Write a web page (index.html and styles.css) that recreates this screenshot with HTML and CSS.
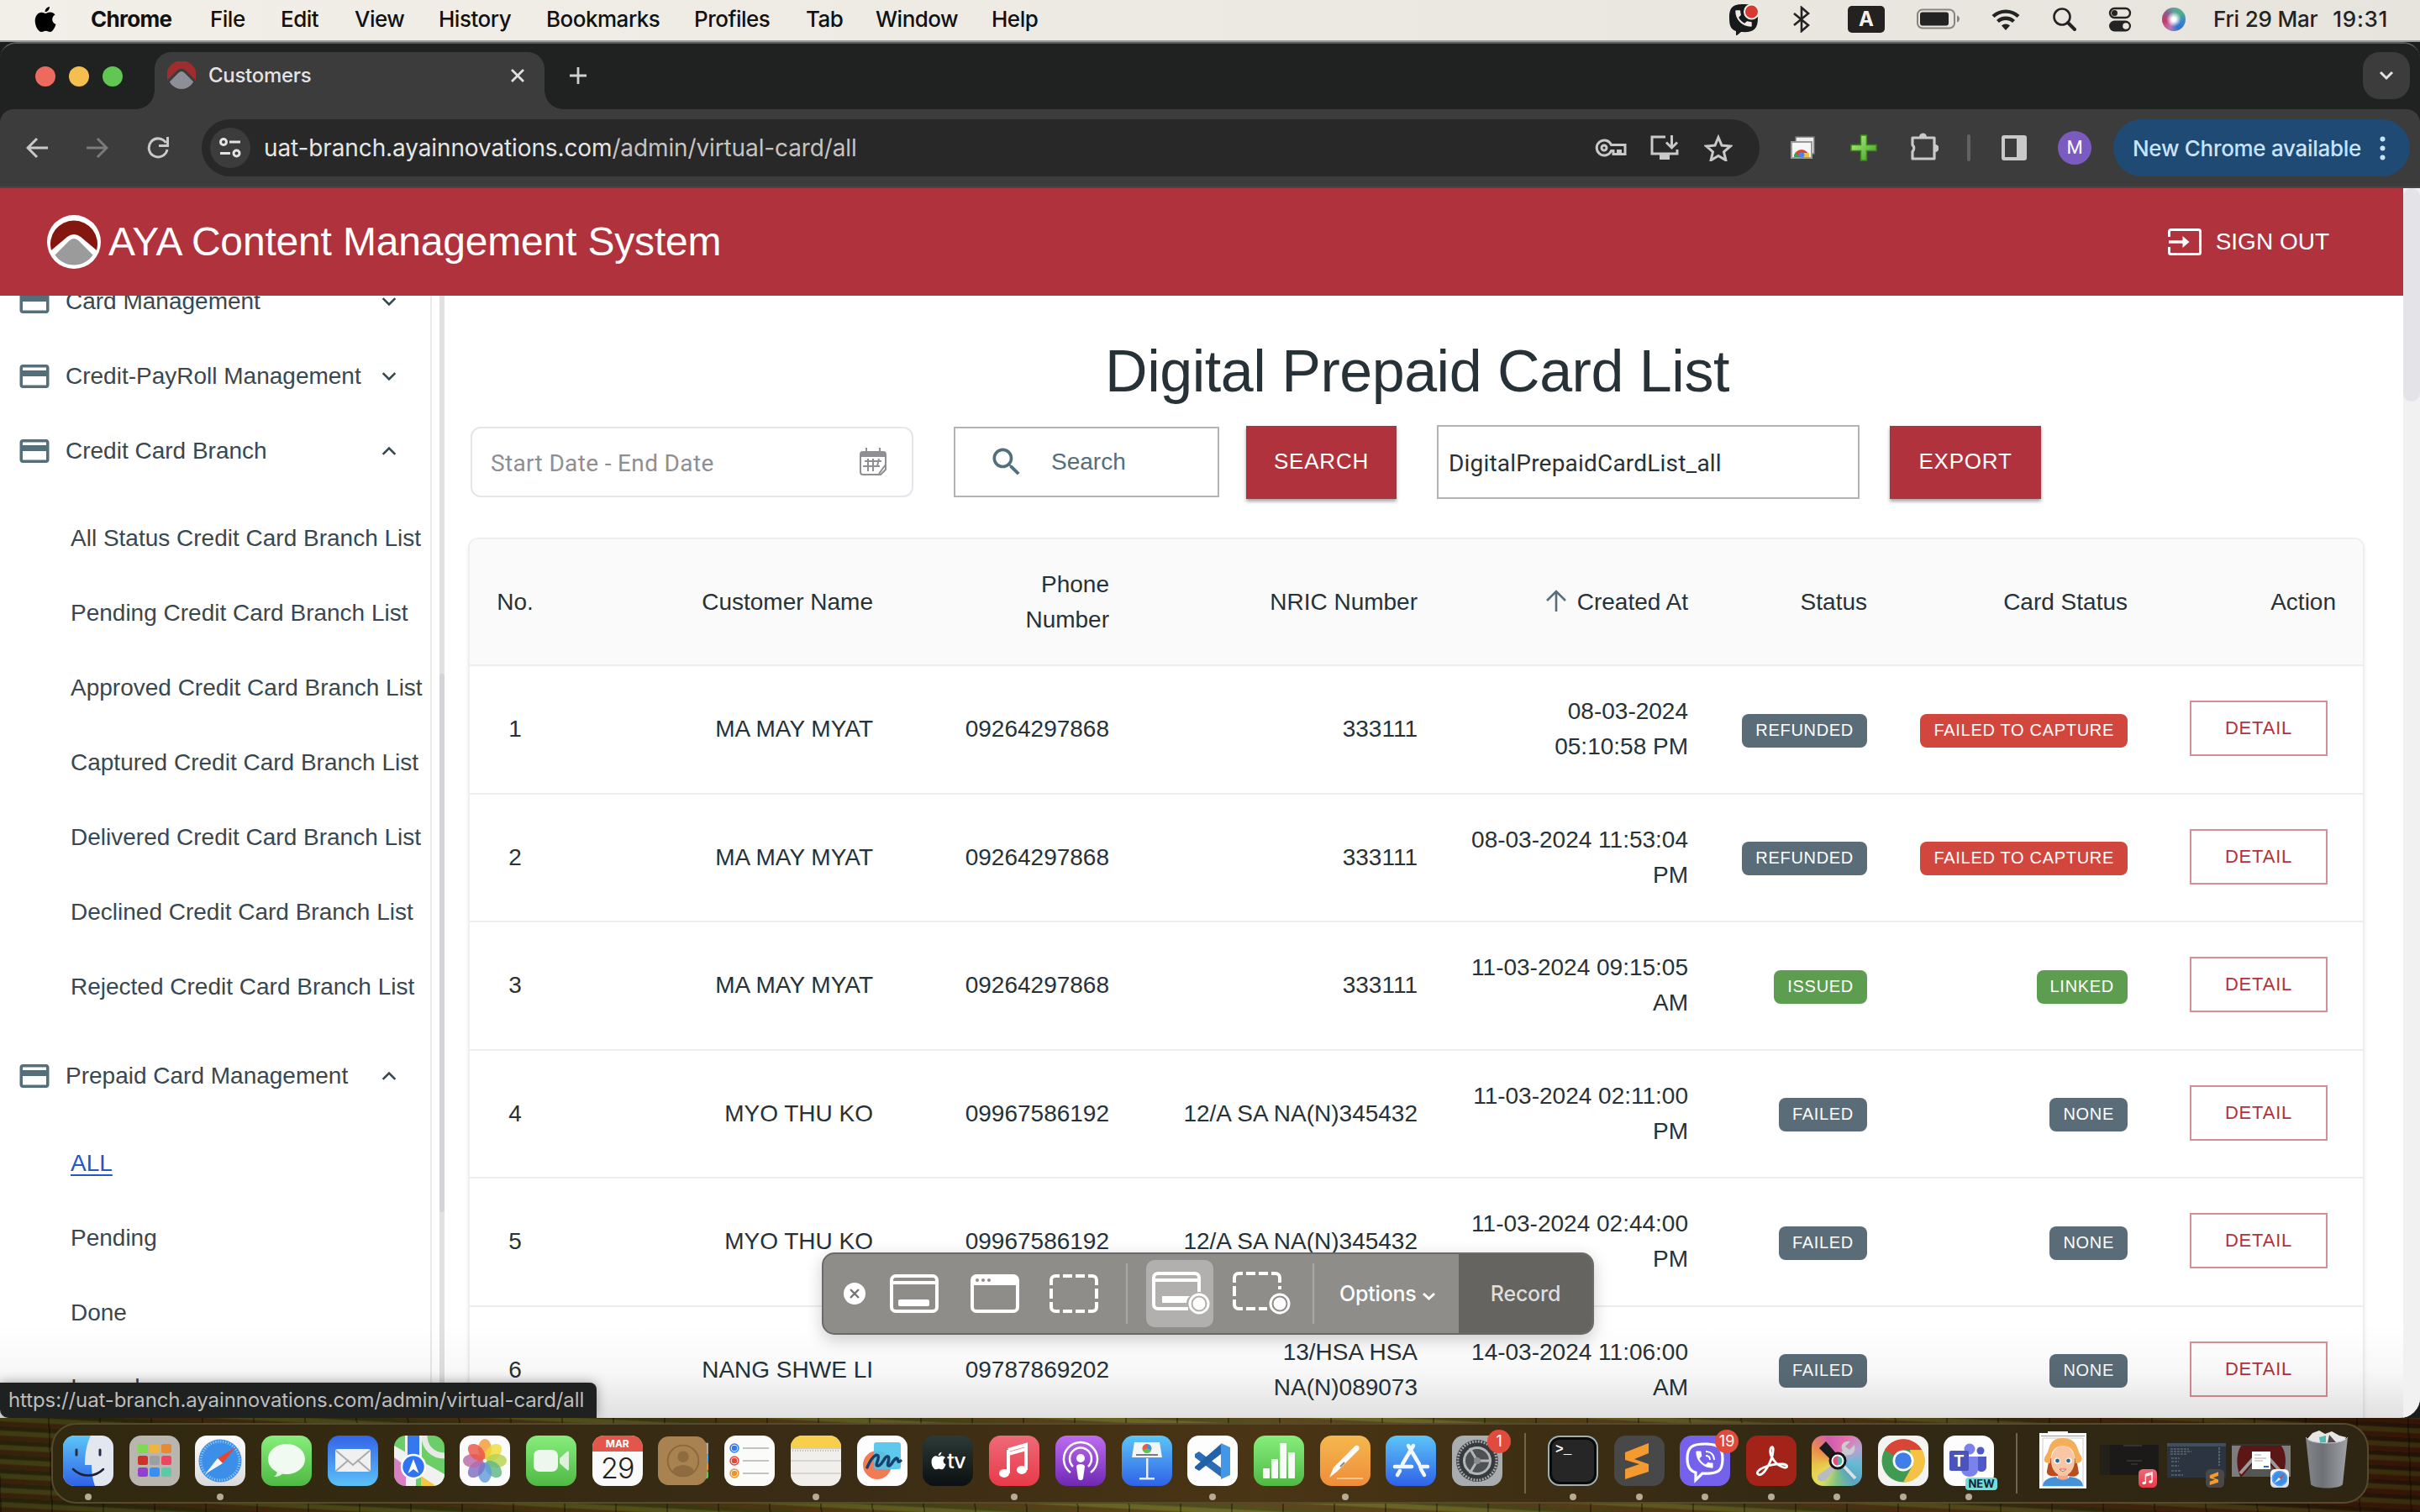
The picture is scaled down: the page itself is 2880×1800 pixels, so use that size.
FILE: index.html
```html
<!DOCTYPE html>
<html lang="en">
<head>
<meta charset="utf-8">
<title>Customers</title>
<link rel="stylesheet" href="styles.css">
</head>
<body>
<svg class="defs" aria-hidden="true">
  <defs>
    <linearGradient id="gBlue" x1="0" y1="0" x2="0" y2="1"><stop offset="0" stop-color="#5cc5f7"/><stop offset="1" stop-color="#2f62e8"/></linearGradient>
    <linearGradient id="gBlueRev" x1="0" y1="0" x2="0" y2="1"><stop offset="0" stop-color="#3464e8"/><stop offset="1" stop-color="#5cc2f6"/></linearGradient>
    <linearGradient id="gGreen" x1="0" y1="0" x2="0" y2="1"><stop offset="0" stop-color="#87ee7c"/><stop offset="1" stop-color="#4fb944"/></linearGradient>
    <linearGradient id="gWhite" x1="0" y1="0" x2="0" y2="1"><stop offset="0" stop-color="#fff"/><stop offset="1" stop-color="#d9dad9"/></linearGradient>
    <linearGradient id="gRed" x1="0" y1="0" x2="0" y2="1"><stop offset="0" stop-color="#ee6a78"/><stop offset="1" stop-color="#e83a48"/></linearGradient>
    <linearGradient id="gPurple" x1="0" y1="0" x2="0" y2="1"><stop offset="0" stop-color="#bd6cf0"/><stop offset="1" stop-color="#7029b4"/></linearGradient>
    <linearGradient id="gOrange" x1="0" y1="0" x2="0" y2="1"><stop offset="0" stop-color="#f4b84e"/><stop offset="1" stop-color="#ef8d3a"/></linearGradient>
    <linearGradient id="gPlus" x1="0" y1="0" x2="1" y2="1"><stop offset="0" stop-color="#b4f58c"/><stop offset="1" stop-color="#3f9a1d"/></linearGradient>
    <linearGradient id="gBin" x1="0" y1="0" x2="1" y2="0"><stop offset="0" stop-color="#83878b"/><stop offset=".4" stop-color="#6d7175"/><stop offset="1" stop-color="#9ea2a6"/></linearGradient>
    <symbol id="card" viewBox="0 0 24 24"><path d="M20 4H4c-1.110 0-1.990.89-1.990 2L2 18c0 1.110.89 2 2 2h16c1.110 0 2-.89 2-2V6c0-1.110-.89-2-2-2zm0 14H4v-6h16v6zm0-10H4V6h16v2z"/></symbol>
    <symbol id="down" viewBox="0 0 16 16"><path d="M1.500 4.500L8 11l6.500-6.500" fill="none" stroke="currentColor" stroke-width="2.300"/></symbol>
    <symbol id="up" viewBox="0 0 16 16"><path d="M1.500 11.500L8 5l6.500 6.500" fill="none" stroke="currentColor" stroke-width="2.300"/></symbol>
    <symbol id="note" viewBox="0 0 60 60"><rect width="60" height="60" rx="14" fill="url(#gRed)"/><path d="M23 17l21-6v30M23 17v28M23 22l21-6" fill="none" stroke="#fff" stroke-width="4"/><ellipse cx="18" cy="45" rx="6" ry="5" fill="#fff"/><ellipse cx="39" cy="41" rx="6" ry="5" fill="#fff"/></symbol>
    <symbol id="compass" viewBox="0 0 60 60"><rect width="60" height="60" rx="14" fill="url(#gWhite)"/><circle cx="30" cy="30" r="25.500" fill="#3b8fe8"/><circle cx="30" cy="30" r="23" fill="none" stroke="#a9d0f7" stroke-width="3" stroke-dasharray="1 2"/><path d="M48 14L27 27l6 6z" fill="#e8452f"/><path d="M12 46l21-13-6-6z" fill="#f4f6f8"/></symbol>
    <symbol id="sublime" viewBox="0 0 60 60"><rect width="60" height="60" rx="14" fill="#484848"/><path d="M13 20l28-11v12l-17 7 17 6v9L13 52V40l17-6-17-5z" fill="#f59a2f"/></symbol>
    <symbol id="handset" viewBox="0 0 24 24"><path d="M6.600 10.800c1.400 2.800 3.800 5.100 6.600 6.600l2.200-2.200c.3-.3.700-.4 1-.2 1.100.4 2.300.6 3.600.6.600 0 1 .4 1 1V20c0 .6-.4 1-1 1C10.600 21 3 13.400 3 4c0-.6.400-1 1-1h3.500c.6 0 1 .4 1 1 0 1.200.2 2.400.6 3.600.1.300 0 .7-.2 1z"/></symbol>
    <symbol id="apple" viewBox="0 0 26 32"><path d="M18 1c.3 3-2.600 6.400-5.400 6.200C12.300 4.300 15 1.300 18 1zM13 9c1.300 0 3-1.500 5.600-1.500 2.400 0 4.600 1.100 5.900 3-4.900 3-4.100 9.500 1 11.600C24 26.500 21.600 31 18.700 31c-2 0-2.700-1.300-5.200-1.300-2.500 0-3.400 1.300-5.200 1.300C4.600 31 .7 24 .7 18 .7 11.700 4.500 7.800 8.400 7.800 10.500 7.800 12 9 13 9z"/></symbol>
  </defs>
</svg>

<div class="menubar">
  <div class="menus">
    <svg class="apple" width="28" height="32"><use href="#apple"/></svg>
    <b>Chrome</b><span>File</span><span>Edit</span><span>View</span><span>History</span><span>Bookmarks</span><span>Profiles</span><span>Tab</span><span>Window</span><span>Help</span>
  </div>
  <div class="extras">
    <svg width="38" height="38" viewBox="0 0 38 38"><path d="M18 1C6 1 1 4 1 17c0 10 2 14 8 16v6l6-5C30 35 35 31 35 17 35 4 30 1 18 1z" fill="#17191a"/><use href="#handset" x="5" y="5" width="26" height="26" fill="#eceae3"/><circle cx="27.500" cy="10" r="8.500" fill="#d63a33" stroke="#f3efe8" stroke-width="2"/></svg>
    <svg class="m-bt" width="22" height="32" viewBox="0 0 22 32"><path d="M2 9l17 14-8 7V2l8 7L2 23" fill="none" stroke="#232323" stroke-width="2.600"/></svg>
    <span class="keyA">A</span>
    <svg class="m-bat" width="52" height="26" viewBox="0 0 52 26"><rect x="1" y="1.500" width="44" height="22" rx="6" fill="none" stroke="#85847f" stroke-width="2"/><rect x="4" y="4.500" width="34" height="16" rx="3" fill="#232323"/><path d="M48 8.500c4 1 4 7 0 8z" fill="#85847f"/></svg>
    <svg class="m-wifi" width="34" height="26" viewBox="0 0 34 26"><g fill="none" stroke="#232323" stroke-width="4.400"><path d="M2 9.500a22 22 0 0 1 30 0"/><path d="M7.500 15.500a14 14 0 0 1 19 0"/></g><path d="M17 26l-5-5.500a7 7 0 0 1 10 0z" fill="#232323"/></svg>
    <svg class="m-find" width="28" height="28" viewBox="0 0 28 28"><circle cx="11" cy="11" r="9.500" fill="none" stroke="#232323" stroke-width="2.600"/><path d="M18 18l8 8" stroke="#232323" stroke-width="4" stroke-linecap="round"/></svg>
    <svg class="m-cc" width="28" height="30" viewBox="0 0 28 30"><rect x="2" y="2" width="24" height="11" rx="5.500" fill="none" stroke="#232323" stroke-width="2.400"/><circle cx="7.500" cy="7.500" r="3.500" fill="#232323"/><rect x="1" y="16.500" width="26" height="13" rx="6.500" fill="#232323"/><circle cx="21" cy="23" r="3.800" fill="#e8e6df"/></svg>
    <i class="siri"></i>
    <span class="date">Fri 29 Mar</span><span class="time">19:31</span>
  </div>
</div>

<div class="window">
  <div class="tabstrip">
    <div class="lights"><i></i><i></i><i></i></div>
    <div class="tab">
      <svg width="34" height="34" viewBox="0 0 64 64"><circle cx="32" cy="32" r="30" fill="#8c8f95"/><path d="M0 44A34 34 0 1 1 64 44L42 22Q32 14 22 22z" fill="#9f2c2f"/><path d="M1 46L24 23q8-7 16 0L63 46" fill="none" stroke="#3b3b3b" stroke-width="6"/></svg>
      <span>Customers</span>
      <svg class="x" width="18" height="18" viewBox="0 0 18 18"><path d="M2 2l14 14M16 2L2 16" stroke="#e0e0e0" stroke-width="2.800"/></svg>
    </div>
    <svg class="plus" width="22" height="22" viewBox="0 0 22 22"><path d="M11 1v20M1 11h20" stroke="#d0d0d0" stroke-width="2.800"/></svg>
    <div class="tabsearch"><svg width="18" height="12" viewBox="0 0 18 12"><path d="M2 2l7 7 7-7" fill="none" stroke="#e3e3e3" stroke-width="3"/></svg></div>
  </div>

  <div class="toolbar">
    <svg class="back" width="26" height="26" viewBox="0 0 26 26"><path d="M26 13H3M13 2L2 13l11 11" fill="none" stroke="#c9c9c9" stroke-width="3"/></svg>
    <svg class="fwd" width="26" height="26" viewBox="0 0 26 26"><path d="M0 13h23M13 2l11 11-11 11" fill="none" stroke="#7b7b7b" stroke-width="3"/></svg>
    <svg class="reload" width="26" height="26" viewBox="0 0 26 26"><path d="M22.500 7A11 11 0 1 0 24 15" fill="none" stroke="#c9c9c9" stroke-width="3"/><path d="M24.500 0v10.500H14" fill="none" stroke="#c9c9c9" stroke-width="3"/></svg>
    <div class="omnibox">
      <i class="tune"><svg width="26" height="24" viewBox="0 0 26 24"><g fill="none" stroke="#e3e3e3" stroke-width="3"><circle cx="5" cy="5" r="3.500"/><path d="M12 5h13M1 18.500h12"/><circle cx="20.500" cy="18.500" r="3.500"/></g></svg></i>
      <span class="url">uat-branch.ayainnovations.com<em>/admin/virtual-card/all</em></span>
      <svg class="key" width="38" height="22" viewBox="0 0 38 22"><g fill="none" stroke="#c9c9c9" stroke-width="3"><path d="M19.500 7.500H36v11h-5.500v-4h-3v4H22v-4h-2.500A9 9 0 1 1 19.500 7.500z"/><circle cx="11" cy="11" r="3" fill="none"/></g></svg>
      <svg width="34" height="30" viewBox="0 0 34 30"><g fill="none" stroke="#c9c9c9" stroke-width="3"><path d="M18 2H2v20h30v-5"/><path d="M25.500 0v14M19 8.500l6.500 6.500 6.500-6.500"/></g><path d="M11 23h12v6H11z" fill="#c9c9c9"/></svg>
      <svg class="star" width="34" height="32" viewBox="0 0 34 32"><path d="M17 3.500l4 9.600 10.300.9-7.800 6.800 2.400 10L17 25.500 8.100 30.800l2.400-10L2.700 14l10.300-.9z" fill="none" stroke="#c9c9c9" stroke-width="3"/></svg>
    </div>
    <svg class="x-shop" width="30" height="28" viewBox="0 0 30 28"><path d="M6 1h22v20H6z" fill="#eee" stroke="#777" stroke-width="1.500"/><path d="M1 7h24v19H1z" fill="#f6f6f6" stroke="#999" stroke-width="2"/><path d="M4 25a9 9 0 0 1 18 0z" fill="#d2483a"/><path d="M4 25a9 9 0 0 1 2-6l5 6z" fill="#3f9b5b"/><path d="M15 20h6.500a9 9 0 0 1 .5 5h-7z" fill="#f4bf3f"/><circle cx="13" cy="22.500" r="3.300" fill="#4b82ee"/></svg>
    <svg class="x-plus" width="32" height="32" viewBox="0 0 32 32"><path d="M12.500 1h7v11.500H31v7H19.500V31h-7V19.500H1v-7h11.500z" fill="url(#gPlus)" stroke="#3a8a18" stroke-width="1.500"/></svg>
    <svg class="x-puz" width="34" height="34" viewBox="0 0 34 34"><path d="M3 7h26v25H3v-8.500a5.500 5.500 0 0 0 0-8z" fill="none" stroke="#c9c9c9" stroke-width="3.200" stroke-linejoin="round"/><path d="M11 6a4.500 4.500 0 0 1 9 0zM30 15a4.500 4.500 0 0 1 0 9z" fill="#c9c9c9"/></svg>
    <i class="vline"></i>
    <svg class="x-side" width="30" height="30" viewBox="0 0 30 30"><path d="M3 0h24a3 3 0 0 1 3 3v24a3 3 0 0 1-3 3H3a3 3 0 0 1-3-3V3a3 3 0 0 1 3-3zm1 4v22h14V4z" fill="#c9c9c9"/></svg>
    <span class="avatar">M</span>
    <div class="update"><span>New Chrome available</span><i></i></div>
  </div>

  <div class="page">
    <div class="app">
      <header class="appbar">
        <svg width="64" height="64" viewBox="0 0 64 64"><circle cx="32" cy="32" r="32" fill="#fff"/><path d="M5 42A28 28 0 1 1 59 42L40 26q-8-6-16 0z" fill="#84170f"/><path d="M9.500 47.500L26 31q6-6 12 0l16.500 16.500a27 27 0 0 1-45 0z" fill="#9b9b9b"/></svg>
        <h1>AYA Content Management System</h1>
        <div class="signout">
          <svg width="40" height="32" viewBox="0 0 40 32"><path d="M1.500 10V3.500a2 2 0 0 1 2-2h33a2 2 0 0 1 2 2v25a2 2 0 0 1-2 2h-33a2 2 0 0 1-2-2V22" fill="none" stroke="#fff" stroke-width="3"/><path d="M1 16h21" stroke="#fff" stroke-width="3.400"/><path d="M17.500 9l8 7-8 7z" fill="#fff"/></svg>
          <span>SIGN OUT</span>
        </div>
      </header>
      <div class="body">
        <nav class="side">
          <div class="group cut"><svg><use href="#card"/></svg><span>Card Management</span><svg class="chev"><use href="#down"/></svg></div>
          <div class="group"><svg><use href="#card"/></svg><span>Credit-PayRoll Management</span><svg class="chev"><use href="#down"/></svg></div>
          <div class="group"><svg><use href="#card"/></svg><span>Credit Card Branch</span><svg class="chev"><use href="#up"/></svg></div>
          <ul>
            <li>All Status Credit Card Branch List</li><li>Pending Credit Card Branch List</li><li>Approved Credit Card Branch List</li><li>Captured Credit Card Branch List</li><li>Delivered Credit Card Branch List</li><li>Declined Credit Card Branch List</li><li>Rejected Credit Card Branch List</li>
          </ul>
          <div class="group"><svg><use href="#card"/></svg><span>Prepaid Card Management</span><svg class="chev"><use href="#up"/></svg></div>
          <ul>
            <li class="active">ALL</li><li>Pending</li><li>Done</li><li>Issued</li>
          </ul>
        </nav>
        <div class="track"><i></i></div>
        <main>
          <h2>Digital Prepaid Card List</h2>
          <div class="filters">
            <div class="dates"><span>Start Date - End Date</span>
              <svg width="34" height="34" viewBox="0 0 34 34"><g fill="none" stroke="#8e8e93" stroke-width="2"><path d="M22 32H5a3 3 0 0 1-3-3V9M32 10v10M32 20v6l-6 6h-4M32 20l-8 11"/><path d="M7 16h20M5 22h20M11 13v15M17 13v15M24 13l-2 9"/><path d="M9 0v6M25 0v6"/></g><path d="M5 4h24a4 4 0 0 1 4 4v3H1V8a4 4 0 0 1 4-4z" fill="#8e8e93"/></svg>
            </div>
            <div class="find"><svg width="44" height="44" viewBox="0 0 24 24"><path d="M15.500 14h-.79l-.28-.27C15.410 12.590 16 11.110 16 9.500 16 5.910 13.090 3 9.500 3S3 5.910 3 9.500 5.910 16 9.500 16c1.610 0 3.090-.59 4.230-1.570l.27.28v.79l5 4.990L20.490 19l-4.990-5zm-6 0C7.010 14 5 11.990 5 9.500S7.010 5 9.500 5 14 7.010 14 9.500 11.990 14 9.500 14z" fill="#546e7a"/></svg><span>Search</span></div>
            <div class="btn b-search">SEARCH</div>
            <div class="fname">DigitalPrepaidCardList_all</div>
            <div class="btn b-export">EXPORT</div>
          </div>
          <div class="table">
            <div class="tr th"><span>No.</span><span>Customer Name</span><span>Phone<br>Number</span><span>NRIC Number</span><span class="sort"><svg width="26" height="28" viewBox="0 0 26 28"><path d="M13 27V3M2 14L13 3l11 11" fill="none" stroke="#546e7a" stroke-width="2.600"/></svg>Created At</span><span>Status</span><span>Card Status</span><span>Action</span></div>
            <div class="tr"><span>1</span><span>MA MAY MYAT</span><span>09264297868</span><span>333111</span><span>08-03-2024<br>05:10:58 PM</span><span><b class="gray">REFUNDED</b></span><span><b class="red">FAILED TO CAPTURE</b></span><span><a>DETAIL</a></span></div>
            <div class="tr"><span>2</span><span>MA MAY MYAT</span><span>09264297868</span><span>333111</span><span>08-03-2024 11:53:04<br>PM</span><span><b class="gray">REFUNDED</b></span><span><b class="red">FAILED TO CAPTURE</b></span><span><a>DETAIL</a></span></div>
            <div class="tr"><span>3</span><span>MA MAY MYAT</span><span>09264297868</span><span>333111</span><span>11-03-2024 09:15:05<br>AM</span><span><b class="green">ISSUED</b></span><span><b class="green">LINKED</b></span><span><a>DETAIL</a></span></div>
            <div class="tr"><span>4</span><span>MYO THU KO</span><span>09967586192</span><span>12/A SA NA(N)345432</span><span>11-03-2024 02:11:00<br>PM</span><span><b class="gray">FAILED</b></span><span><b class="gray">NONE</b></span><span><a>DETAIL</a></span></div>
            <div class="tr"><span>5</span><span>MYO THU KO</span><span>09967586192</span><span>12/A SA NA(N)345432</span><span>11-03-2024 02:44:00<br>PM</span><span><b class="gray">FAILED</b></span><span><b class="gray">NONE</b></span><span><a>DETAIL</a></span></div>
            <div class="tr"><span>6</span><span>NANG SHWE LI</span><span>09787869202</span><span>13/HSA HSA<br>NA(N)089073</span><span>14-03-2024 11:06:00<br>AM</span><span><b class="gray">FAILED</b></span><span><b class="gray">NONE</b></span><span><a>DETAIL</a></span></div>
          </div>
        </main>
      </div>
    </div>
    <div class="scroll"><i></i></div>
    <div class="shade"></div>
    <div class="statusurl">https://uat-branch.ayainnovations.com/admin/virtual-card/all</div>
  </div>
</div>

<div class="desktop">
  <div class="dock">
    <div class="apps">
      <div class="ic run"><svg viewBox="0 0 60 60"><rect width="60" height="60" rx="14" fill="#e3e8f0"/><path d="M14 0h19c-5 10-7 22-7 35h8c0 9 1 17 4 25H14A14 14 0 0 1 0 46V14A14 14 0 0 1 14 0z" fill="url(#gBlue)"/><path d="M16 17v6M44 17v6" stroke="#222c44" stroke-width="3" stroke-linecap="round"/><path d="M12 40c10 10 26 10 36 0" fill="none" stroke="#1a2238" stroke-width="2.500" stroke-linecap="round"/></svg></div>
      <div class="ic"><svg viewBox="0 0 60 60"><rect width="60" height="60" rx="14" fill="#b9b6af"/><rect x="10" y="10" width="12" height="11" rx="2.500" fill="#7ddb50"/><rect x="24" y="10" width="12" height="11" rx="2.500" fill="#f0b63a"/><rect x="38" y="10" width="12" height="11" rx="2.500" fill="#ea8930"/><rect x="10" y="24" width="12" height="11" rx="2.500" fill="#d02f2a"/><rect x="24" y="24" width="12" height="11" rx="2.500" fill="#9da0a2"/><rect x="38" y="24" width="12" height="11" rx="2.500" fill="#ef4562"/><rect x="10" y="38" width="12" height="11" rx="2.500" fill="#9240d0"/><rect x="24" y="38" width="12" height="11" rx="2.500" fill="#3490f3"/><rect x="38" y="38" width="12" height="11" rx="2.500" fill="#5cc9a7"/></svg></div>
      <div class="ic run"><svg><use href="#compass"/></svg></div>
      <div class="ic"><svg viewBox="0 0 60 60"><rect width="60" height="60" rx="14" fill="url(#gGreen)"/><ellipse cx="30" cy="28" rx="22" ry="18" fill="#f1faf0"/><path d="M19 41c0 4-1 6-4 8 5 0 9-2 12-5z" fill="#e6f5e4"/></svg></div>
      <div class="ic"><svg viewBox="0 0 60 60"><rect width="60" height="60" rx="14" fill="url(#gBlueRev)"/><rect x="9" y="16" width="42" height="27" rx="3" fill="#f0f0f0"/><path d="M10 18l20 17 20-17M10 42l15-13M50 42L35 29" fill="none" stroke="#a9a9a9" stroke-width="1.800"/></svg></div>
      <div class="ic"><svg viewBox="0 0 60 60"><clipPath id="rr"><rect width="60" height="60" rx="14"/></clipPath><g clip-path="url(#rr)"><path d="M0 0h60v60H0z" fill="#6cce67"/><path d="M0 25l20 12v23H0z" fill="#d97fc4"/><path d="M0 12l60 34v14H46L0 26z" fill="#f1f1f1"/><path d="M14 36h12v24H14z" fill="#f1f1f1"/><path d="M32 60V48l18 12z" fill="#f3c744"/><path d="M36 0c0 14 10 24 24 24" fill="none" stroke="#e8e8e8" stroke-width="7"/><path d="M13 0h20v30H13z" fill="#f1f1f1"/><path d="M16 0h14v30H16z" fill="#3577ef"/></g><circle cx="23" cy="37" r="14" fill="#2f74f0" stroke="#fff" stroke-width="2.500"/><path d="M23 28l6.500 17-6.500-5-6.500 5z" fill="#fff"/></svg></div>
      <div class="ic"><svg viewBox="0 0 60 60"><rect width="60" height="60" rx="14" fill="#fbfbfb"/><g fill-opacity=".82"><ellipse cx="30" cy="16" rx="8" ry="12" fill="#f39a36"/><ellipse cx="30" cy="16" rx="8" ry="12" fill="#ecdc3a" transform="rotate(45 30 30)"/><ellipse cx="30" cy="16" rx="8" ry="12" fill="#b6d34d" transform="rotate(90 30 30)"/><ellipse cx="30" cy="16" rx="8" ry="12" fill="#60b682" transform="rotate(135 30 30)"/><ellipse cx="30" cy="16" rx="8" ry="12" fill="#629bdc" transform="rotate(180 30 30)"/><ellipse cx="30" cy="16" rx="8" ry="12" fill="#7d6fc4" transform="rotate(225 30 30)"/><ellipse cx="30" cy="16" rx="8" ry="12" fill="#b968a8" transform="rotate(270 30 30)"/><ellipse cx="30" cy="16" rx="8" ry="12" fill="#ea5546" transform="rotate(315 30 30)"/></g></svg></div>
      <div class="ic"><svg viewBox="0 0 60 60"><rect width="60" height="60" rx="14" fill="url(#gGreen)"/><rect x="9" y="17" width="29" height="26" rx="7" fill="#eef7ed"/><path d="M40 27l9-8c1-1 2 0 2 1v20c0 1-1 2-2 1l-9-8z" fill="#dff0dd"/></svg></div>
      <div class="ic cal"><b>MAR</b><span>29</span></div>
      <div class="ic"><svg viewBox="0 0 62 60"><rect x="50" y="8" width="12" height="14" fill="#aaa"/><rect x="50" y="22" width="12" height="11" fill="#5ba4e0"/><rect x="50" y="33" width="12" height="9" fill="#e69535"/><rect x="50" y="42" width="12" height="10" rx="3" fill="#5fca62"/><rect width="60" height="60" rx="13" fill="#a98251"/><circle cx="31" cy="30" r="19" fill="none" stroke="#8c683c" stroke-width="2"/><circle cx="31" cy="25" r="7" fill="#8f6b40"/><path d="M18 43c2-10 24-10 26 0-8 8-18 8-26 0z" fill="#8f6b40"/></svg></div>
      <div class="ic"><svg viewBox="0 0 60 60"><rect width="60" height="60" rx="14" fill="#fbfbfa"/><g stroke="#c3c3c5" stroke-width="1.800"><path d="M22 15h31M22 30h31M22 45h31"/></g><g fill="none" stroke-width="1.500"><circle cx="12" cy="15" r="5" stroke="#2f7bf6"/><circle cx="12" cy="30" r="5" stroke="#e2473c"/><circle cx="12" cy="45" r="5" stroke="#e8932f"/></g><circle cx="12" cy="15" r="3.300" fill="#2f7bf6"/><circle cx="12" cy="30" r="3.300" fill="#e2473c"/><circle cx="12" cy="45" r="3.300" fill="#e8932f"/></svg></div>
      <div class="ic run"><svg viewBox="0 0 60 60"><rect width="60" height="60" rx="14" fill="#f0efec"/><path d="M0 15V14A14 14 0 0 1 14 0h32a14 14 0 0 1 14 14v1z" fill="#f8cf4b"/><path d="M0 15.500h60M0 30h60M0 45h60" stroke="#cfcdc9" stroke-width="1.500"/><path d="M2 18h56" stroke="#aaa" stroke-width="1.500" stroke-dasharray="1 2"/></svg></div>
      <div class="ic"><svg viewBox="0 0 60 60"><rect width="60" height="60" rx="14" fill="#fdfdfd"/><circle cx="24" cy="35" r="17" fill="#f07c56"/><rect x="20" y="8" width="32" height="32" rx="3" fill="#50c4ea" fill-opacity=".92"/><path d="M12 38c5-12 11-17 13-14 2 4-5 12 0 12s8-13 12-11c3 2-3 11 1 11 3 0 5-8 9-9 3 0 0 7 5 3" fill="none" stroke="#17406b" stroke-width="3.500" stroke-linecap="round"/></svg></div>
      <div class="ic tv"><svg width="18" height="22"><use href="#apple" fill="#fff"/></svg><span>tv</span></div>
      <div class="ic run"><svg><use href="#note"/></svg></div>
      <div class="ic"><svg viewBox="0 0 60 60"><rect width="60" height="60" rx="14" fill="url(#gPurple)"/><g fill="none" stroke="#fff" stroke-width="2.500"><path d="M18 44a20 20 0 1 1 24 0"/><path d="M21 37a13 13 0 1 1 18 0"/></g><circle cx="30" cy="27" r="5" fill="#fff"/><path d="M25 37c0-4 10-4 10 0l-2 14c-1 3-5 3-6 0z" fill="#fff"/></svg></div>
      <div class="ic"><svg viewBox="0 0 60 60"><rect width="60" height="60" rx="14" fill="url(#gBlue)"/><path d="M15 8h30l3 18H12z" fill="#f5f5f5"/><path d="M29 27h2.500v23H29zM21 50h18v2.500H21z" fill="#e6edf5"/><path d="M17 23h26" stroke="#456" stroke-width="1.500"/><circle cx="30" cy="15.500" r="5.500" fill="#5fc05a"/><path d="M30 15.500V10a5.500 5.500 0 0 1 5 7z" fill="#3e8eea"/><path d="M30 15.500V10a5.500 5.500 0 0 0-5 7z" fill="#ee5a42"/></svg></div>
      <div class="ic run"><svg viewBox="0 0 60 60"><rect width="60" height="60" rx="14" fill="#fdfdfd"/><path d="M9 22l5-3 27 20v11L9 26z" fill="#2a6db5"/><path d="M9 37l31-27v12L14 42l-5-3z" fill="#2460a8"/><path d="M40 9l11 5v33l-11 5z" fill="#4297e6"/></svg></div>
      <div class="ic"><svg viewBox="0 0 60 60"><rect width="60" height="60" rx="14" fill="url(#gGreen)"/><g fill="#f6fbf5"><rect x="11" y="39" width="8" height="12" rx="1"/><rect x="21" y="28" width="8" height="23" rx="1"/><rect x="31" y="9" width="8" height="42" rx="1"/><rect x="41" y="20" width="8" height="31" rx="1"/></g></svg></div>
      <div class="ic run"><svg viewBox="0 0 60 60"><rect width="60" height="60" rx="14" fill="url(#gOrange)"/><path d="M11 50l5-12 26-26c3-1 6 1 4 5L20 43z" fill="#fafafa"/><path d="M24 37l5-5" stroke="#888" stroke-width="2"/><path d="M20 51h31" stroke="#fbdcae" stroke-width="1.500"/></svg></div>
      <div class="ic"><svg viewBox="0 0 60 60"><rect width="60" height="60" rx="14" fill="url(#gBlue)"/><g stroke="#f2f7ff" stroke-width="4.500" stroke-linecap="round"><path d="M33 12L20 34M17 42l-3 5M27 12l13 22M42 40l4 7M11 37h20M41 37h9"/></g></svg></div>
      <div class="ic"><svg viewBox="0 0 60 60"><rect width="60" height="60" rx="14" fill="#a9adb0"/><circle cx="30" cy="30" r="25" fill="#37393b"/><circle cx="30" cy="30" r="23" fill="none" stroke="#a5a8aa" stroke-width="3" stroke-dasharray="2 1.500"/><circle cx="30" cy="30" r="15.500" fill="#4e5154" stroke="#b3b6b8" stroke-width="3"/><path d="M30 30h17M30 30l-9-15M30 30l-9 15" stroke="#b3b6b8" stroke-width="3"/><circle cx="30" cy="30" r="4" fill="#898c8f"/></svg><em>1</em></div>
    </div>
    <i class="sep"></i>
    <div class="apps second">
      <div class="ic run term"><svg viewBox="0 0 60 60"><rect x="1" y="1" width="58" height="58" rx="13" fill="#0a0a0a" stroke="#9fb0b5" stroke-width="2"/><rect x="5" y="5" width="50" height="50" rx="9" fill="#262626"/></svg><span>&gt;_</span></div>
      <div class="ic run"><svg><use href="#sublime"/></svg></div>
      <div class="ic run"><svg viewBox="0 0 60 60"><rect width="60" height="60" rx="14" fill="#7562ec"/><path d="M30 10c-16 0-21 4-21 18 0 9 3 14 10 16v9l8-8c19 1 24-3 24-17S46 10 30 10z" fill="none" stroke="#fff" stroke-width="3.200"/><use href="#handset" x="16" y="15" width="27" height="27" fill="#fff"/><path d="M31 19c6 0 10 4 10 10M31 24c3 0 5 2 5 5" fill="none" stroke="#fff" stroke-width="1.800"/></svg><em>19</em></div>
      <div class="ic run"><svg viewBox="0 0 60 60"><rect width="60" height="60" rx="14" fill="#a32318"/><path d="M14 46c-4-5 14-13 30-12 7 1 5 5 1 4C36 36 27 24 29 16c1-4 4-3 3 3-1 11-12 32-18 27z" fill="none" stroke="#fff" stroke-width="2.800"/></svg></div>
      <div class="ic run"><i class="rainbow"></i><svg viewBox="0 0 60 60"><path d="M17 7l17 20-7 6L9 15z" fill="#1b1b1d"/><path d="M51 11l-6 6-5-4 6-6c-8-2-13 5-9 11l-6 8 4 4 6-7c8 2 12-5 10-12z" fill="#c9cdd0"/><path d="M8 47l18-13 4 4-13 15c-6 4-13 0-9-6z" fill="#b8bcc0"/><path d="M36 34l16 17" stroke="#dde0e2" stroke-width="4"/><circle cx="31" cy="30" r="9" fill="#fff" stroke="#151515" stroke-width="3"/><circle cx="31" cy="30" r="5.500" fill="#47b8a3"/><path d="M31 24.500a5.500 5.500 0 0 0 0 11z" fill="#de5182"/></svg></div>
      <div class="ic run"><svg viewBox="0 0 60 60"><rect width="60" height="60" rx="14" fill="#f3f3f1"/><circle cx="30" cy="30" r="25.500" fill="#3f9b52"/><path d="M30 30L8 17a25.500 25.500 0 0 1 44.200 0H30z" fill="#d94536"/><path d="M52.200 17A25.500 25.500 0 0 1 30 55.500L41 36 38 17z" fill="#f5c344"/><circle cx="30" cy="30" r="12.500" fill="#fff"/><circle cx="30" cy="30" r="9.800" fill="#3f7de8"/></svg></div>
      <div class="ic run teams"><svg viewBox="0 0 60 60"><rect width="60" height="60" rx="14" fill="#fdfdfd"/><circle cx="31" cy="16" r="6.500" fill="#7b83eb"/><circle cx="44" cy="18" r="4.500" fill="#5059c9"/><path d="M39 25h12v12c0 8-12 8-12 0z" fill="#5059c9"/><path d="M21 25h20v15c0 12-20 12-20 0z" fill="#7b83eb"/><rect x="7" y="18" width="23" height="24" rx="2" fill="#4b53bc"/></svg><span>T</span><b>NEW</b></div>
    </div>
    <i class="sep"></i>
    <svg class="portrait" width="56" height="68" viewBox="0 0 56 68"><path d="M10 0h24v4H10z" fill="#f2f2f2"/><path d="M0 2h56v66H0z" fill="#fff"/><path d="M2 5.500h52" stroke="#7f9fc4"/><path d="M4 8h48v58H4z" fill="none" stroke="#ccc"/><path d="M12 32h32l3 18c-3 5-9 4-13 3H21c-6 1-13 0-12-6z" fill="#b84d22"/><path d="M22 46h12v12H22z" fill="#eda98a"/><path d="M4 65c1-8 8-10 16-11 3 5 13 5 16 0 8 1 15 3 16 11z" fill="#4592d8"/><ellipse cx="28" cy="35" rx="14" ry="18" fill="#f9c6a5"/><path d="M13 38C14 26 16 18 28 17c12 1 14 9 15 21 8 0 9-5 6-10-4-5-3-20-21-20S13 22 8 28c-4 6-3 10 5 10z" fill="#f4ae58"/><circle cx="21" cy="35" r="3.600" fill="#fff"/><circle cx="35" cy="35" r="3.600" fill="#fff"/><circle cx="21.500" cy="35" r="2.400" fill="#246b8d"/><circle cx="34.500" cy="35" r="2.400" fill="#246b8d"/><path d="M24 45h8q-4 5-8 0z" fill="#fff" stroke="#cf6151"/></svg>
    <svg class="mini1" width="72" height="56" viewBox="0 0 72 56"><path d="M0 1h70v36H0z" fill="#1b1a18"/><path d="M0 1h12v36H0z" fill="#232119"/><path d="M28 2h22" stroke="#333" stroke-width="2"/><path d="M32 20h18M37 24h8" stroke="#444"/><use href="#note" x="46" y="30" width="22" height="22"/></svg>
    <svg class="mini2" width="72" height="56" viewBox="0 0 72 56"><path d="M0 0h70v41H0z" fill="#2b343f"/><path d="M0 0h70v4H0z" fill="#424e5b"/><path d="M4 7h22M4 10h25M4 13h20M5 18h10M5 22h9M5 27h9M5 33h12M5 38h14M62 5v22" stroke="#70808f" stroke-width="1.200" stroke-dasharray="3 1"/><use href="#sublime" x="46" y="31" width="22" height="22"/></svg>
    <svg class="mini3" width="72" height="56" viewBox="0 0 72 56"><path d="M0 0h70v39H0z" fill="#7d7d7d"/><path d="M10 39C4 24 6 8 12 1h46c7 8 8 24 2 38z" fill="#5c1616"/><path d="M35 12L12 39h46z" fill="#555"/><path d="M32 10L10 35M38 10l22 25" stroke="#9b9b9b" stroke-width="4"/><path d="M0 0h70v2H0z" fill="#333"/><path d="M24 9h22v21H24z" fill="#fff"/><path d="M27 13h8M27 17h14M27 20h10" stroke="#aaa"/><path d="M38 26h6v2h-6z" fill="#2866c8"/><use href="#compass" x="46" y="30" width="22" height="22"/></svg>
    <svg class="bin" width="54" height="72" viewBox="0 0 54 72"><path d="M4 10l6-7 8-3 7 4 8-3 9 5 8 2-3 8H8z" fill="#e6e6e6"/><path d="M18 8l8-2v8h-7z" fill="#56b6b0"/><path d="M30 5l8 9-10 1z" fill="#55484c"/><path d="M2 8q3 7 25 7t25-7l-6 56c-3 6-34 6-38 0z" fill="url(#gBin)"/><path d="M2 8q4 7 25 7t25-7" fill="none" stroke="#b9bcbf"/></svg>
  </div>
</div>

<div class="recorder">
  <svg class="r-close" width="28" height="28" viewBox="0 0 28 28"><circle cx="14" cy="14" r="13" fill="#fff"/><path d="M9 9l10 10M19 9L9 19" stroke="#777" stroke-width="2.400"/></svg>
  <svg class="r1" width="58" height="46" viewBox="0 0 58 46"><g fill="none" stroke="#fff" stroke-width="4"><rect x="2" y="2" width="54" height="42" rx="5"/><path d="M2 10h54"/></g><rect x="10" y="30" width="37" height="8" rx="2" fill="#fff"/></svg>
  <svg class="r2" width="58" height="46" viewBox="0 0 58 46"><rect x="2" y="2" width="54" height="42" rx="5" fill="none" stroke="#fff" stroke-width="4"/><path d="M2 3h54v10H2z" fill="#fff"/><g fill="#8e8d8a"><circle cx="8" cy="7" r="2"/><circle cx="15" cy="7" r="2"/><circle cx="22" cy="7" r="2"/></g></svg>
  <svg class="r3" width="58" height="46" viewBox="0 0 58 46"><path d="M2 13V7a5 5 0 0 1 5-5h5M16 2h11M31 2h11M46 2h5a5 5 0 0 1 5 5v6M56 17v12M56 33v6a5 5 0 0 1-5 5h-5M42 44H31M27 44H16M12 44H7a5 5 0 0 1-5-5v-6M2 29V17" fill="none" stroke="#fff" stroke-width="4"/></svg>
  <i class="bar b1"></i>
  <div class="chosen"><svg width="70" height="52" viewBox="0 0 70 52"><path d="M43 44H7a5 5 0 0 1-5-5V7a5 5 0 0 1 5-5h44a5 5 0 0 1 5 5v17M2 10h54" fill="none" stroke="#fff" stroke-width="4"/><path d="M12 29h33c-3 3-4 5-4 8H12z" fill="#fff"/><circle cx="56" cy="38" r="11" fill="none" stroke="#fff" stroke-width="3"/><circle cx="56" cy="38" r="7.500" fill="#fff"/></svg></div>
  <svg class="r5" width="70" height="52" viewBox="0 0 70 52"><path d="M2 13V7a5 5 0 0 1 5-5h5M16 2h11M31 2h11M46 2h5a5 5 0 0 1 5 5v6M56 17v4M41 44H31M27 44H16M12 44H7a5 5 0 0 1-5-5v-6M2 29V17" fill="none" stroke="#fff" stroke-width="4"/><circle cx="56" cy="38" r="11" fill="none" stroke="#fff" stroke-width="3"/><circle cx="56" cy="38" r="7.500" fill="#fff"/></svg>
  <i class="bar b2"></i>
  <span class="opts">Options</span>
  <svg class="r-dn" width="17" height="11" viewBox="0 0 17 11"><path d="M2 2l6.500 6L15 2" fill="none" stroke="#fff" stroke-width="3"/></svg>
  <div class="rec">Record</div>
</div>
</body>
</html>
```
FILE: styles.css
```css
* { box-sizing: border-box; }
html, body { margin: 0; }
body {
  width: 2880px; height: 1800px; overflow: hidden; position: relative;
  display: flex; flex-direction: column;
  background: #1b1e1d;
  font-family: "Liberation Sans", Arial, sans-serif; color: #263238;
}
svg { display: block; flex: none; }
i, em, b { font-style: normal; }
.defs { position: absolute; width: 0; height: 0; }

/* menu bar */
.menubar {
  height: 50px; flex: none; display: flex; justify-content: space-between; align-items: center;
  padding: 0 38px 3px 0; background: linear-gradient(90deg, #f1efe8, #e6e4dc);
  border-bottom: 2px solid #9b9a96;
  font: 500 26px Inter, sans-serif; letter-spacing: -.5px; color: #111; white-space: nowrap;
}
.menus {
  display: grid; align-items: center; padding-left: 40px;
  grid-template-columns: 68px 142px 84px 88px 100px 128px 176px 133px 83px 138px 60px;
}
.menus b { font-weight: 700; letter-spacing: -.7px; }
.extras { display: flex; align-items: center; color: #232323; }
.m-bt { margin-left: 38px; }
.keyA { margin-left: 44px; width: 44px; height: 32px; border-radius: 5px; background: #232220; color: #f3f1ea; font-weight: 700; font-size: 24px; line-height: 32px; text-align: center; letter-spacing: 0; }
.m-bat { margin-left: 38px; }
.m-wifi { margin-left: 37px; }
.m-find { margin-left: 39px; }
.m-cc { margin-left: 38px; }
.siri { margin: 0 33px 0 36px; width: 28px; height: 28px; border-radius: 50%; background: radial-gradient(circle at 50% 50%, #fff 0 12%, transparent 45%), conic-gradient(#5fa39c, #4cae92, #3d83c4, #3273c9, #b878b5, #c8386e, #8d5a8a, #5fa39c); }
.date { letter-spacing: -.2px; }
.time { margin-left: 18px; letter-spacing: .7px; }

/* browser window */
.window { height: 1638px; flex: none; display: flex; flex-direction: column; border-radius: 20px 20px 24px 0; overflow: hidden; background: #202221; border-top: 2px solid #5d5f5e; }
.tabstrip { height: 78px; flex: none; display: flex; align-items: flex-start; background: #202221; padding-right: 12px; }
.lights { display: flex; gap: 16px; padding: 27px 0 0 42px; width: 184px; flex: none; }
.lights i { width: 24px; height: 24px; border-radius: 50%; background: #ed6a5f; }
.lights i:nth-child(2) { background: #f5bf4f; }
.lights i:nth-child(3) { background: #62c655; }
.tab { position: relative; margin-top: 10px; width: 464px; height: 68px; flex: none; border-radius: 20px 20px 0 0; background: #3c3c3c; display: flex; align-items: center; padding: 0 23px 13px 15px; font: 500 24px Inter, sans-serif; letter-spacing: -.3px; color: #e3e3e3; }
.tab::before, .tab::after { content: ""; position: absolute; bottom: 0; width: 22px; height: 22px; left: -22px; background: radial-gradient(circle at 0 0, transparent 21.500px, #3c3c3c 22px); }
.tab::after { left: auto; right: -22px; background: radial-gradient(circle at 100% 0, transparent 21.500px, #3c3c3c 22px); }
.tab span { margin-left: 15px; }
.tab .x { margin-left: auto; }
.plus { margin: 27px 0 0 29px; }
.tabsearch { margin: 10px 0 0 auto; width: 56px; height: 56px; border-radius: 20px; background: #3c3c3c; display: flex; align-items: center; justify-content: center; }
.toolbar { height: 94px; flex: none; display: flex; align-items: center; background: #3c3c3c; border-bottom: 2px solid #474747; border-radius: 16px 16px 0 0; padding: 0 12px 0 31px; }
.fwd { margin-left: 46px; }
.reload { margin-left: 46px; }
.omnibox { margin-left: 39px; width: 1854px; height: 68px; border-radius: 34px; background: #282828; display: flex; align-items: center; padding: 0 32px 0 10px; }
.tune { width: 48px; height: 48px; border-radius: 50%; background: #3c3c3c; display: flex; align-items: center; justify-content: center; }
.url { margin-left: 16px; font: 400 28px Inter, sans-serif; letter-spacing: -.12px; color: #e6e6e6; }
.url em { color: #c4c4c4; }
.key { margin: 0 28px 0 auto; }
.star { margin-left: 30px; }
.x-shop { margin-left: 37px; }
.x-plus { margin-left: 41px; }
.x-puz { margin-left: 39px; margin-bottom: 4px; }
.vline { width: 4px; height: 32px; border-radius: 2px; background: #626262; margin-left: 34px; }
.x-side { margin-left: 37px; }
.avatar { margin-left: 37px; width: 40px; height: 40px; border-radius: 50%; background: #7b5bbf; color: #fff; font: 400 22px/40px Roboto, sans-serif; text-align: center; }
.update { margin-left: auto; width: 353px; height: 68px; border-radius: 34px; background: #1f4a74; display: flex; align-items: center; padding-left: 23px; font: 500 26px Inter, sans-serif; letter-spacing: -.3px; color: #c9e3fb; white-space: nowrap; }
.update i { width: 5px; height: 5px; border-radius: 50%; background: #c9e3fb; margin-left: 23px; box-shadow: 0 -11px 0 .5px #c9e3fb, 0 0 0 .5px #c9e3fb, 0 11px 0 .5px #c9e3fb; }

/* page */
.page { position: relative; flex: 1; min-height: 0; display: flex; background: #fff; }
.app { width: 2860px; display: flex; flex-direction: column; min-height: 0; }
.scroll { width: 20px; background: #f1f1f1; }
.scroll i { display: block; height: 254px; border-radius: 10px; background: #e3e3e8; }
.appbar { height: 128px; flex: none; background: #b0323c; color: #fff; display: flex; align-items: center; padding: 0 88px 0 56px; }
.appbar h1 { margin: 0 0 2px 9px; font-weight: 400; font-size: 48px; letter-spacing: -.18px; }
.signout { margin-left: auto; display: flex; align-items: center; gap: 17px; font-size: 28px; }
.body { flex: 1; min-height: 0; display: flex; overflow: hidden; }
.side { width: 514px; flex: none; border-right: 2px solid #e9e9e9; overflow: hidden; font-size: 28px; color: #3a474e; white-space: nowrap; }
.group { height: 89px; display: flex; align-items: center; padding: 0 40px 0 20px; }
.group svg { width: 42px; height: 42px; fill: #546e7a; }
.group span { margin-left: 16px; }
.group .chev { width: 18px; height: 18px; margin-left: auto; color: #37474f; }
.group.cut { margin-top: -38px; }
.side ul { list-style: none; margin: 0; padding: 16px 0 16px 84px; }
.side li { height: 89px; line-height: 88px; }
.side .active { color: #2456c5; text-decoration: underline; text-decoration-thickness: 2px; text-underline-offset: 4px; }
.track { width: 6px; margin-left: 9px; background: #e1e1e1; flex: none; padding-top: 450px; }
.track i { display: block; height: 641px; border-radius: 3px; background: #d2d3d6; }
main { margin-left: 30px; width: 2255px; }
h2 { margin: 48px 0 0; font-weight: 400; font-size: 70px; line-height: 84px; letter-spacing: -.48px; text-align: center; }
.filters { margin-top: 22px; height: 88px; display: flex; align-items: center; }
.dates { width: 527px; height: 84px; border: 2px solid #e5e5ea; border-radius: 12px; margin-left: 1px; display: flex; align-items: center; justify-content: space-between; padding: 0 29px 0 22px; font: 400 28px Roboto, sans-serif; letter-spacing: .35px; color: #8e8e93; }
.dates span { margin-top: 2px; }
.find { margin-left: 48px; width: 316px; height: 84px; border: 2px solid #b3b3b3; display: flex; align-items: center; padding-left: 39px; font-size: 28px; color: #546e7a; }
.find span { margin-left: 31px; }
.btn { background: #b0323c; color: #fff; font-size: 26px; letter-spacing: .8px; text-align: center; height: 87px; line-height: 84px; box-shadow: 0 3px 4px rgba(0,0,0,.35); }
.b-search { margin-left: 32px; width: 179px; }
.fname { margin-left: 48px; width: 503px; height: 88px; border: 2px solid #b3b3b3; line-height: 87px; padding-left: 12px; font-family: Roboto, sans-serif; font-size: 28px; letter-spacing: .2px; }
.b-export { margin-left: 36px; width: 180px; }

.table { margin: 46px 0 0 -2px; border: 2px solid #eeefef; border-radius: 12px; box-shadow: 0 2px 4px rgba(0,0,0,.08); font-size: 28px; line-height: 42px; overflow: hidden; }
.tr { display: grid; grid-template-columns: 108px 404px 281px 367px 322px 213px 310px 248px; align-items: center; height: 152.500px; border-bottom: 2px solid #ededee; text-align: right; }
.tr > span { padding-right: 32px; white-space: nowrap; }
.tr > span:first-child { text-align: center; padding: 0; }
.th { height: 151px; background: #fafafa; }
.sort svg { display: inline-block; vertical-align: -3px; margin-right: 12px; }
.tr b { display: inline-block; height: 40px; line-height: 39px; padding: 0 16px; border-radius: 8px; color: #fff; font-weight: 400; font-size: 20px; letter-spacing: .7px; vertical-align: middle; margin-top: 1px; }
.gray { background: #5a6c77; }
.red { background: #d2473d; }
.green { background: #5c9d50; }
.tr a { display: inline-block; width: 164px; height: 66px; margin: 0 10px 2px 0; line-height: 62px; border: 2px solid #d78f95; color: #b0323c; font-size: 22px; letter-spacing: .8px; text-align: center; vertical-align: middle; }
.shade { position: absolute; left: 0; right: 20px; bottom: 0; height: 110px; background: linear-gradient(rgba(0,0,0,0), rgba(0,0,0,.03) 50%, rgba(0,0,0,.12)); }
.statusurl { position: absolute; left: 0; bottom: 0; width: 710px; height: 42px; border-radius: 0 8px 0 10px; background: #1f2120; color: #bdbdbd; font: 400 24px/41px Inter, sans-serif; letter-spacing: -.1px; padding-left: 10px; white-space: nowrap; box-shadow: 0 0 14px rgba(0,0,0,.35); }

/* desktop strip */
.desktop {
  flex: 1; display: flex; align-items: flex-start; padding: 6px 61px;
  background:
    repeating-linear-gradient(88deg, rgba(0,0,0,.35) 0 2px, transparent 2px 61px),
    repeating-linear-gradient(3deg, rgba(70,20,5,.4) 0 5px, rgba(110,110,30,.25) 7px 11px, rgba(20,15,0,.3) 13px 17px),
    linear-gradient(90deg, #2d2a0e, #4c4a18 30%, #6d6a2a 52%, #4e461b 75%, #271507);
}
.dock { width: 2758px; height: 96px; border-radius: 30px; border: 2px solid #55492f; background: linear-gradient(90deg, #30280f, #3b2c15 35%, #4a3514 52%, #332913 75%, #2e2613); display: flex; padding: 13px 0 0 12px; }
.apps { display: flex; gap: 18.730px; }
.apps.second { gap: 18.500px; }
.ic { position: relative; width: 60px; height: 60px; flex: none; }
.ic > svg { width: 60px; height: 60px; }
.run::after { content: ""; position: absolute; left: 26px; top: 69px; width: 8px; height: 8px; border-radius: 50%; background: #b7ab95; }
.ic em { position: absolute; right: -10px; top: -7px; width: 28px; height: 28px; border-radius: 50%; background: #e14b3d; color: #fff; font: 400 18px/28px Inter, sans-serif; text-align: center; }
.cal { border-radius: 14px; overflow: hidden; background: #fafafa; text-align: center; font-family: Inter, sans-serif; color: #222; }
.cal b { display: block; height: 19px; background: #e3564b; color: #fff; font-size: 12px; line-height: 20px; }
.cal span { display: block; font-size: 34px; line-height: 40px; font-weight: 300; letter-spacing: -1px; }
.tv { border-radius: 14px; background: linear-gradient(#2c3a36, #0b0f11); display: flex; align-items: center; justify-content: center; gap: 1px; color: #fff; font: 500 25px Inter, sans-serif; letter-spacing: -1px; }
.tv > svg { width: 18px; height: 22px; }
.sep { width: 2px; height: 72px; background: #6f664d; margin: -3px 26px 0 26px; flex: none; }
.term span { position: absolute; left: 9px; top: 8px; color: #fff; font: 700 16px "Liberation Mono", monospace; }
.rainbow { position: absolute; inset: 0; border-radius: 14px; background: conic-gradient(from 20deg, #e86ba8, #b7a2d0, #64bbd3, #57a5c4, #7fc285, #e5e05c, #e8c349, #ea8a4c, #cf5eb0, #e86ba8); }
.rainbow + svg { position: relative; }
.teams span { position: absolute; left: 12px; top: 19px; color: #fff; font: 700 19px Inter, sans-serif; }
.teams b { position: absolute; left: 26px; top: 50px; width: 38px; height: 15px; border-radius: 4px; background: #6ee0df; color: #123; font: 700 13px/15px Inter, sans-serif; text-align: center; z-index: 1; }
.portrait { margin: -5px 0 0 0; }
.mini1 { margin: 10px 0 0 16px; }
.mini2 { margin: 9px 0 0 8px; }
.mini3 { margin: 10px 0 0 5px; }
.bin { margin: -6px 0 0 14px; }

/* screen recording panel */
.recorder { position: absolute; left: 978px; top: 1491px; width: 919px; height: 98px; border-radius: 15px; overflow: hidden; background: #8e8d8a; border: 2px solid #6b6a68; display: flex; align-items: center; padding-left: 23px; color: #fff; font: 500 25px Inter, sans-serif; letter-spacing: -.2px; box-shadow: 0 6px 20px rgba(0,0,0,.2); }
.r1 { margin-left: 28px; }
.r2 { margin-left: 38px; }
.r3 { margin-left: 36px; }
.bar { width: 2px; height: 72px; background: #a9a8a5; flex: none; }
.b1 { margin-left: 33px; }
.chosen { margin-left: 22px; width: 80px; height: 80px; border-radius: 10px; background: #b1b0ae; padding: 14px 0 0 7px; flex: none; }
.r5 { margin: 0 0 0 23px; }
.b2 { margin-left: 25px; }
.opts { margin-left: 30px; width: 93px; }
.r-dn { margin: 6px 0 0 5px; }
.rec { margin-left: auto; width: 159px; height: 100%; flex: none; background: #656461; color: #dededd; line-height: 95px; text-align: center; }
```
